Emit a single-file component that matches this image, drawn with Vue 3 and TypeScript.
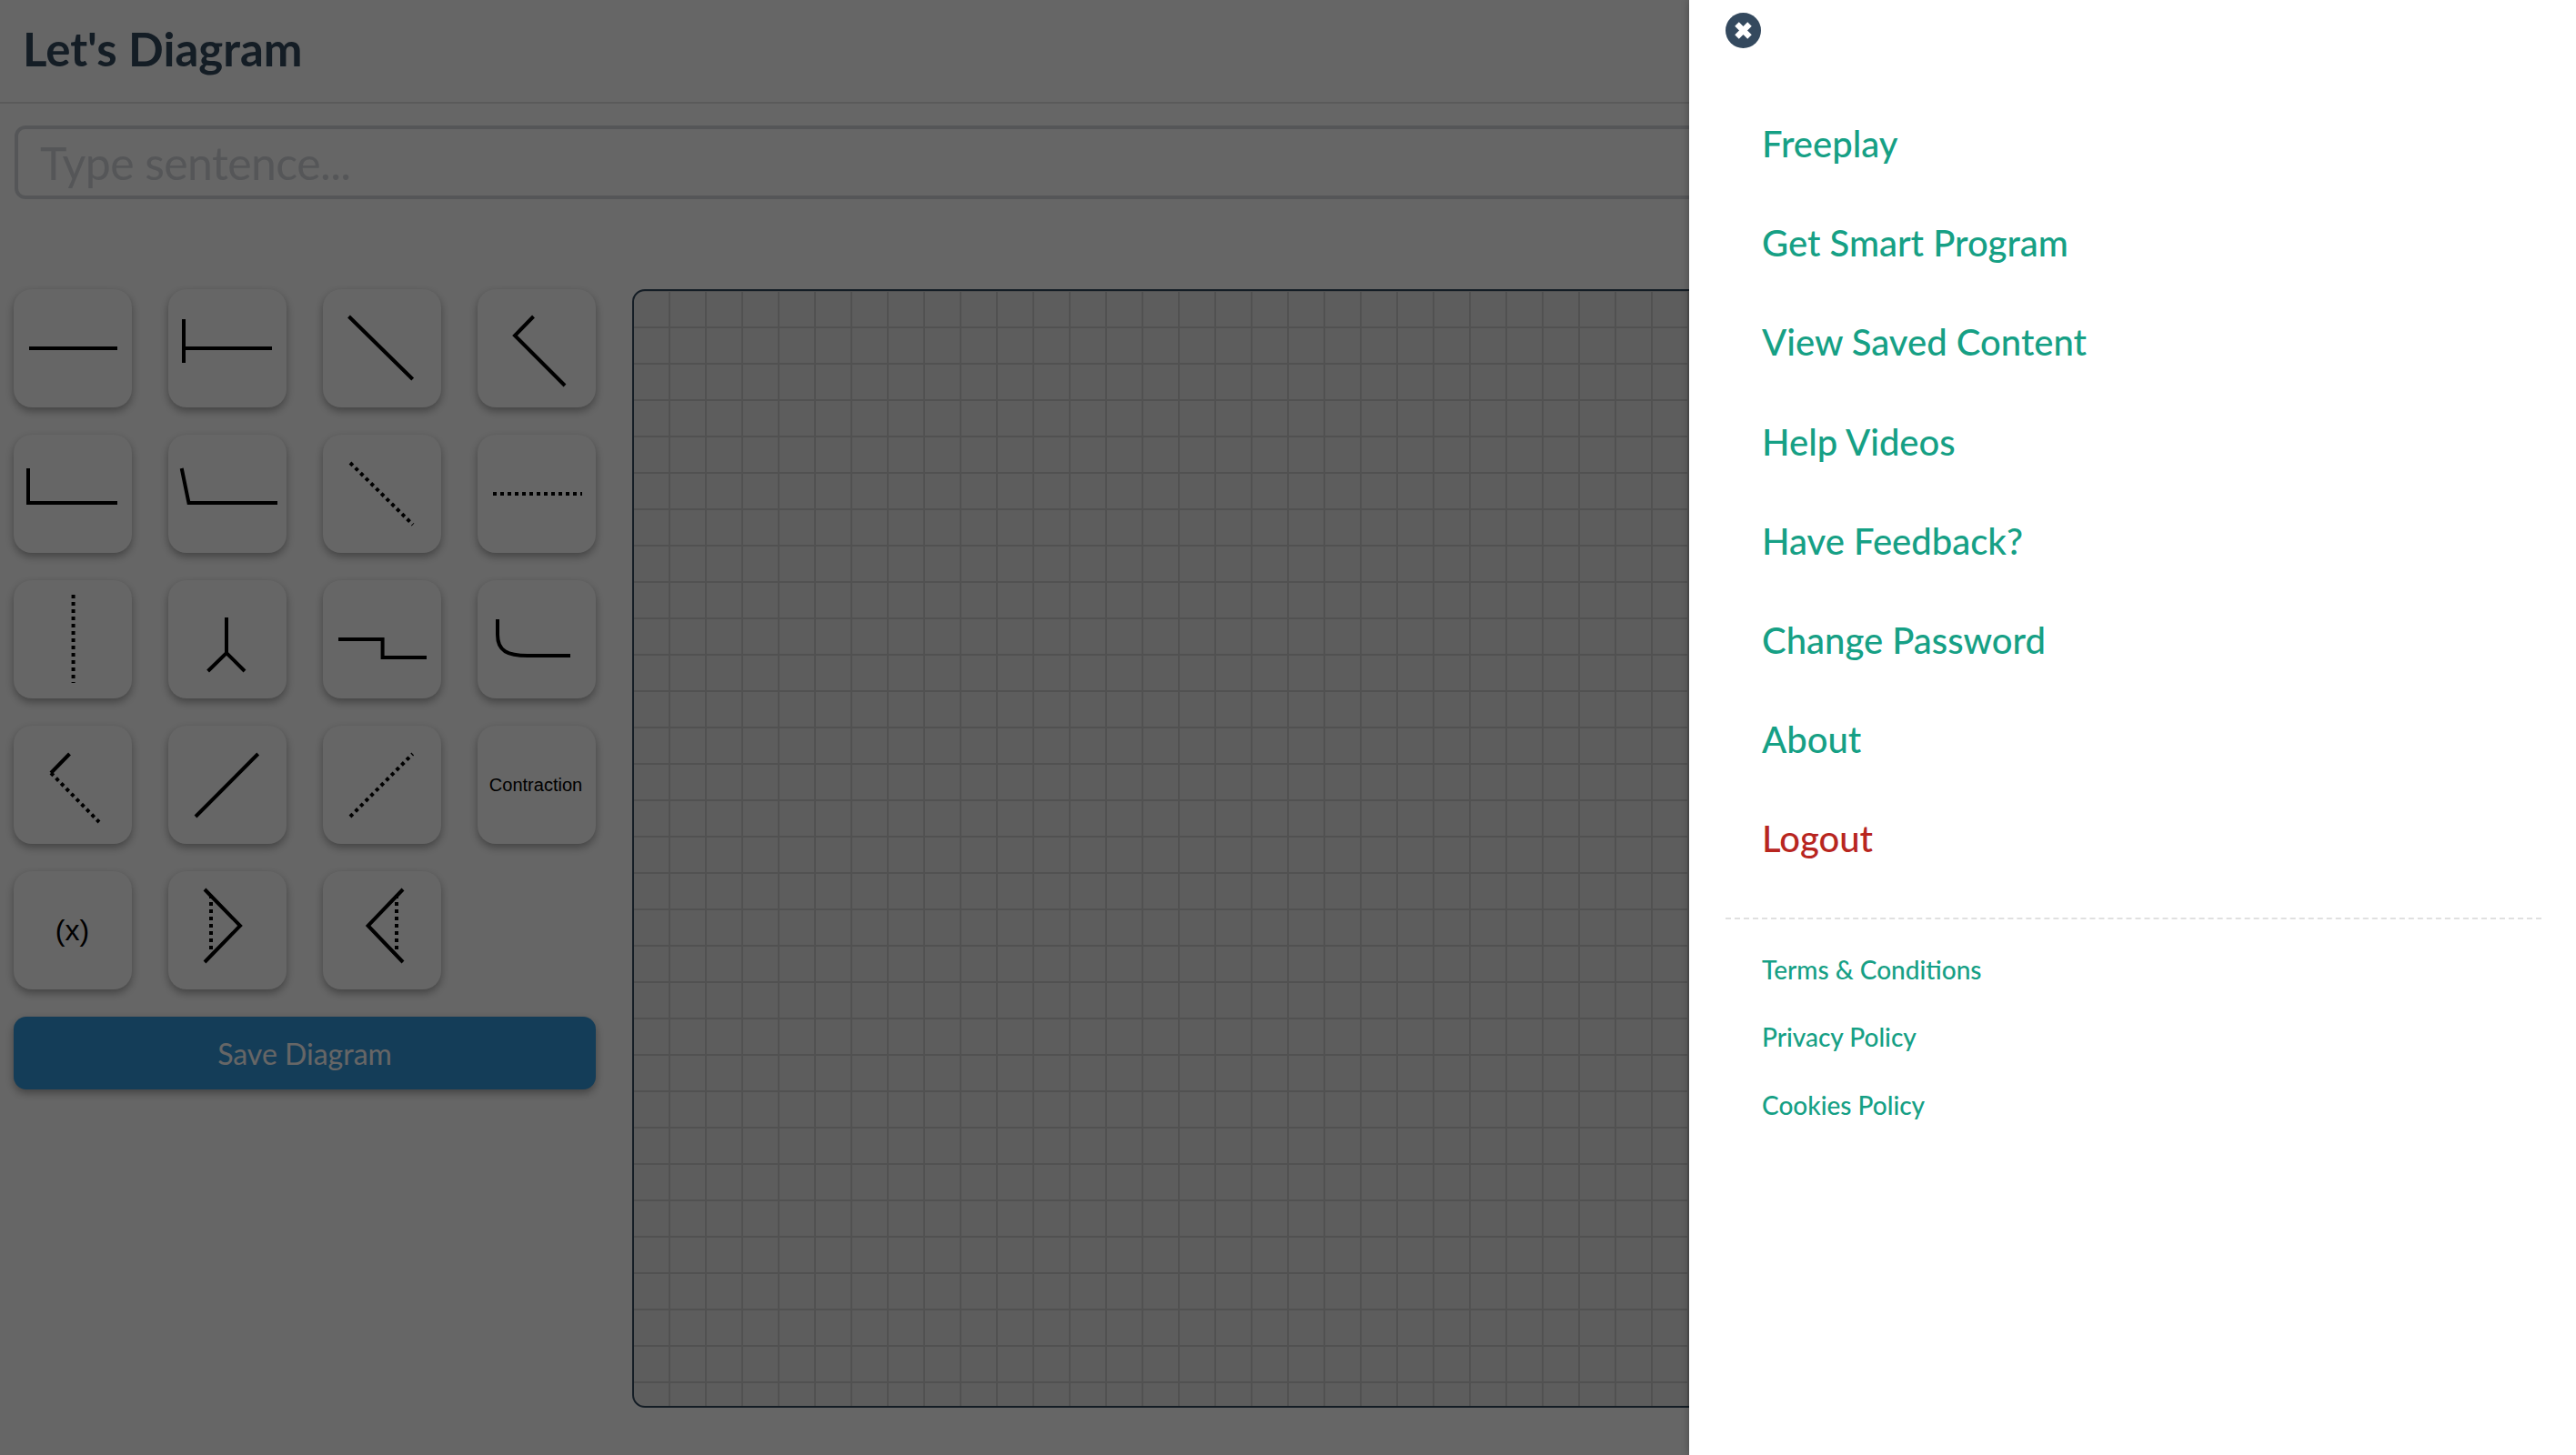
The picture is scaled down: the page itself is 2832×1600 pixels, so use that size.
<script setup lang="ts">
interface Tool {
  id: number
  solid?: string
  dotted?: string
  label?: string
  labelClass?: string
}

const tools: Tool[] = [
  { id: 1, solid: 'M17 65H114' },
  { id: 2, solid: 'M17 33V81M17 65H114' },
  { id: 3, solid: 'M28.5 30L98.7 99' },
  { id: 4, solid: 'M61.5 30L41 51L96 106' },
  { id: 5, solid: 'M16 37V75H114' },
  { id: 6, solid: 'M14.7 37L22.5 75H120' },
  { id: 7, dotted: 'M30 31L99 99' },
  { id: 8, dotted: 'M17 65H115' },
  { id: 9, dotted: 'M65.6 16V113' },
  { id: 10, solid: 'M64 41V80M43.6 100L64 80L84 100' },
  { id: 11, solid: 'M17 65H65.6V85H114' },
  { id: 12, solid: 'M22 43V60C22 78 33 83 55 83H102' },
  { id: 13, solid: 'M61.5 31L41 52', dotted: 'M41 52L94 106' },
  { id: 14, solid: 'M30 100L98.7 31' },
  { id: 15, dotted: 'M30 100L98.7 31' },
  { id: 16, label: 'Contraction', labelClass: 'small' },
  { id: 17, label: '(x)', labelClass: 'large' },
  { id: 18, solid: 'M40 20L79 60L40 100', dotted: 'M47 26V90' },
  { id: 19, solid: 'M88 20L49.6 60L88 100', dotted: 'M81 26V90' },
]

const mainLinks = [
  'Freeplay',
  'Get Smart Program',
  'View Saved Content',
  'Help Videos',
  'Have Feedback?',
  'Change Password',
  'About',
]
const legalLinks = ['Terms & Conditions', 'Privacy Policy', 'Cookies Policy']
</script>

<template>
  <div class="page">
    <header class="header">
      <h1 class="title">Let's Diagram</h1>
    </header>
    <input class="sentence" type="text" placeholder="Type sentence..." />
    <main class="workspace">
      <section class="tools">
        <div class="tool-grid">
          <button v-for="tool in tools" :key="tool.id" class="tool" type="button">
            <svg v-if="!tool.label" class="glyph" viewBox="0 0 130 130" width="130" height="130" fill="none">
              <path v-if="tool.dotted" :d="tool.dotted" stroke="#000" stroke-width="4" stroke-dasharray="4 4" />
              <path v-if="tool.solid" :d="tool.solid" stroke="#000" stroke-width="4" />
            </svg>
            <span v-else class="tool-label" :class="tool.labelClass">{{ tool.label }}</span>
          </button>
        </div>
        <button class="save" type="button">Save Diagram</button>
      </section>
      <section class="canvas"></section>
    </main>

    <div class="overlay"></div>

    <aside class="drawer">
      <button class="close" type="button" aria-label="Close">
        <svg viewBox="0 0 39 39" width="39" height="39">
          <circle cx="19.5" cy="19.5" r="19.5" fill="#34495e" />
          <path d="M12.5 12.5L26.5 26.5M26.5 12.5L12.5 26.5" stroke="#fff" stroke-width="6.4" />
        </svg>
      </button>
      <nav class="main-nav">
        <a v-for="link in mainLinks" :key="link" class="nav-link">{{ link }}</a>
        <a class="nav-link logout">Logout</a>
      </nav>
      <div class="divider"></div>
      <nav class="legal-nav">
        <a v-for="link in legalLinks" :key="link" class="legal-link">{{ link }}</a>
      </nav>
    </aside>
  </div>
</template>

<style>
html,
body {
  margin: 0;
  overflow: hidden;
  background: #fff;
}
</style>

<style scoped>
.page {
  position: relative;
  width: 2832px;
  height: 1600px;
  overflow: hidden;
  background: #fff;
  font-family: Lato, "Liberation Sans", sans-serif;
}

.header {
  box-sizing: border-box;
  height: 114px;
  border-bottom: 2px solid #e0e0e0;
  padding: 24px 0 0 25px;
}

.title {
  margin: 0;
  font-size: 51px;
  line-height: 60px;
  font-weight: 700;
  color: #34495e;
}

.sentence {
  display: block;
  box-sizing: border-box;
  width: calc(100% - 32px);
  height: 81px;
  margin: 24px 16px 0;
  padding: 0 24px;
  border: 4px solid #d5d8dc;
  border-radius: 12px;
  background: #fff;
  font-family: inherit;
  font-size: 50px;
  letter-spacing: -0.6px;
  outline: none;
}

.sentence::placeholder {
  color: #d5d8dc;
  opacity: 1;
}

.workspace {
  display: flex;
  align-items: flex-start;
  gap: 40px;
  margin: 99px 15px 0;
}

.tools {
  flex: 0 0 640px;
}

.tool-grid {
  display: grid;
  grid-template-columns: repeat(4, 130px);
  grid-auto-rows: 130px;
  gap: 30px 40px;
}

.tool {
  position: relative;
  display: flex;
  align-items: center;
  justify-content: center;
  width: 130px;
  height: 130px;
  padding: 0;
  border: none;
  border-radius: 20px;
  background: #fefefe;
  box-shadow: 0 4px 10px rgba(0, 0, 0, 0.35);
}

.glyph {
  display: block;
}

.tool-label {
  font-family: "Liberation Sans", Arial, sans-serif;
  color: #000;
}

.tool-label.small {
  margin-right: 2px;
  font-size: 20px;
}

.tool-label.large {
  margin-right: 1px;
  font-size: 32px;
}

.save {
  display: block;
  width: 640px;
  height: 80px;
  margin-top: 30px;
  border: none;
  border-radius: 14px;
  background: #3498db;
  color: #fff;
  font-family: inherit;
  font-size: 32px;
  box-shadow: 0 4px 10px rgba(0, 0, 0, 0.35);
}

.canvas {
  flex: 1;
  box-sizing: border-box;
  height: 1230px;
  border: 2px solid #34495e;
  border-radius: 14px;
  background-color: #e8e8e8;
  background-image:
    linear-gradient(to right, transparent 38px, #cbcbcb 38px),
    linear-gradient(to bottom, transparent 38.5px, #cbcbcb 38.5px);
  background-position: 0 0, 0 1px;
  background-size: 40px 40px;
}

.overlay {
  position: absolute;
  inset: 0;
  background: rgba(0, 0, 0, 0.6);
}

.drawer {
  position: absolute;
  top: 0;
  right: 0;
  bottom: 0;
  width: 975px;
  box-sizing: border-box;
  background: #fff;
  box-shadow: 0 0 8px rgba(0, 0, 0, 0.3);
}

.close {
  display: block;
  width: 39px;
  height: 39px;
  margin: 14px 0 0 40px;
  padding: 0;
  border: none;
  background: none;
}

.close svg {
  display: block;
}

.main-nav {
  margin-top: 51px;
}

.nav-link {
  display: block;
  padding: 30px 0 30px 80px;
  font-size: 40px;
  font-weight: 500;
  line-height: 49.2px;
  color: #16a085;
}

.nav-link.logout {
  color: #b8261f;
}

.divider {
  margin: 31px 38px 0 40px;
  border-top: 2px dashed #e0e0e0;
}

.legal-nav {
  margin-top: 18px;
}

.legal-link {
  display: block;
  padding: 19px 0 19.5px 80px;
  font-size: 28px;
  font-weight: 500;
  line-height: 36px;
  color: #16a085;
}
</style>
